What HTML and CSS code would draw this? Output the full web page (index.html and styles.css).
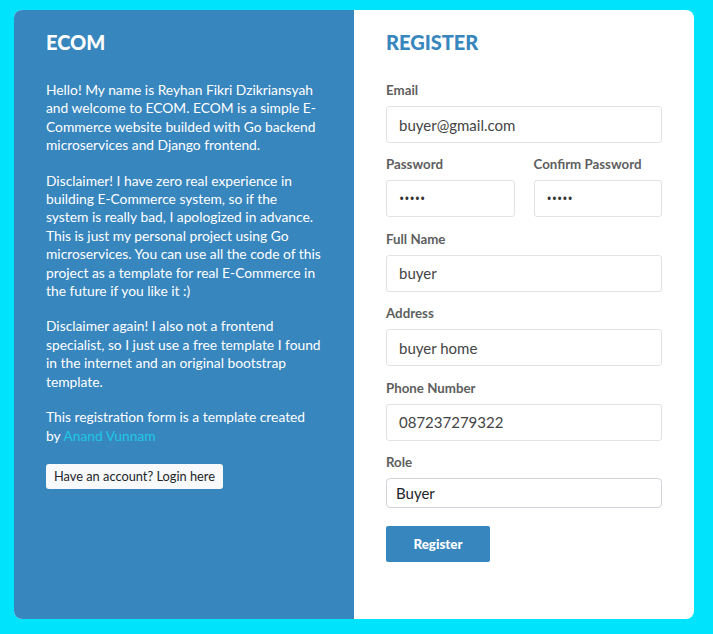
FILE: index.html
```html
<!DOCTYPE html>
<html lang="en">
<head>
    <meta charset="UTF-8">
    <meta name="viewport" content="width=device-width, initial-scale=1.0">
    <title>ECOM - Register</title>
    <link rel="stylesheet" href="styles.css">
</head>
<body>
    <div class="card">
        <!-- Left: about -->
        <div class="info">
            <h2>ECOM</h2>
            <p>Hello! My name is Reyhan Fikri Dzikriansyah and welcome to ECOM. ECOM is a simple E-Commerce website builded with Go backend microservices and Django frontend.</p>
            <p>Disclaimer! I have zero real experience in building E-Commerce system, so if the system is really bad, I apologized in advance. This is just my personal project using Go microservices. You can use all the code of this project as a template for real E-Commerce in the future if you like it :)</p>
            <p>Disclaimer again! I also not a frontend specialist, so I just use a free template I found in the internet and an original bootstrap template.</p>
            <p>This registration form is a template created by <a href="#">Anand Vunnam</a></p>
            <a class="btn-light" href="#">Have an account? Login here</a>
        </div>

        <!-- Right: form -->
        <div class="form">
            <h2>REGISTER</h2>
            <form>
                <div class="group">
                    <label for="email">Email</label>
                    <input type="text" id="email" value="buyer@gmail.com">
                </div>
                <div class="row">
                    <div class="group">
                        <label for="password">Password</label>
                        <input type="password" id="password" value="buyer">
                    </div>
                    <div class="group">
                        <label for="confirm">Confirm Password</label>
                        <input type="password" id="confirm" value="buyer">
                    </div>
                </div>
                <div class="group">
                    <label for="fullname">Full Name</label>
                    <input type="text" id="fullname" value="buyer">
                </div>
                <div class="group">
                    <label for="address">Address</label>
                    <input type="text" id="address" value="buyer home">
                </div>
                <div class="group">
                    <label for="phone">Phone Number</label>
                    <input type="text" id="phone" value="087237279322">
                </div>
                <div class="group">
                    <label for="role">Role</label>
                    <select id="role">
                        <option>Buyer</option>
                        <option>Seller</option>
                    </select>
                </div>
                <button type="button" class="btn-submit">Register</button>
            </form>
        </div>
    </div>
</body>
</html>
```

FILE: styles.css
```css
body {
    margin: 0;
    background: #00e3fd;
    font-family: Lato, "Open Sans", sans-serif;
}
.card {
    display: flex;
    width: 680px;
    height: 609px;
    margin: 10px 0 0 14px;
    border-radius: 8px;
    overflow: hidden;
    background: #fff;
}
.info, .form {
    width: 340px;
    box-sizing: border-box;
    padding: 20px 32px;
}
.info {
    background: #3886be;
    color: #fff;
}
h2 {
    margin: 0 0 27px;
    font-size: 20px;
    line-height: 24px;
    font-weight: 900;
}
.form h2 {
    color: #3886be;
}
.info p {
    margin: 0 0 17px;
    font-size: 13.8px;
    line-height: 18.4px;
}
.info p a {
    color: #1fc6e6;
    text-decoration: none;
}
.btn-light {
    display: inline-block;
    margin-top: 2px;
    background: #f8f9fa;
    color: #212529;
    font-size: 12.8px;
    line-height: 25px;
    padding: 0 8px;
    border-radius: 3px;
    text-decoration: none;
}
.group {
    margin-bottom: 12.4px;
}
.row {
    display: flex;
    gap: 19px;
}
.row .group {
    flex: 1;
}
label {
    display: block;
    margin-bottom: 7px;
    font-size: 13.3px;
    line-height: 18px;
    font-weight: 700;
    color: #5e5e5e;
}
input {
    display: block;
    width: 100%;
    height: 37px;
    box-sizing: border-box;
    padding: 0 12px;
    border: 1px solid #e2e2e2;
    border-radius: 3px;
    font-family: inherit;
    font-size: 15px;
    color: #444;
}
input[type="password"] {
    font-family: "Open Sans", sans-serif;
    font-size: 14px;
    color: #333;
}
select {
    display: block;
    width: 100%;
    height: 30px;
    box-sizing: border-box;
    padding: 0 9px;
    border: 1px solid #ced4da;
    border-radius: 4px;
    background: #fff;
    appearance: none;
    font-family: inherit;
    font-size: 15px;
    color: #212529;
}
.btn-submit {
    display: block;
    margin-top: 18px;
    width: 104px;
    height: 36px;
    border: none;
    border-radius: 2px;
    background: #3886be;
    color: #fff;
    font-family: inherit;
    font-size: 13.4px;
    font-weight: 900;
}
```
